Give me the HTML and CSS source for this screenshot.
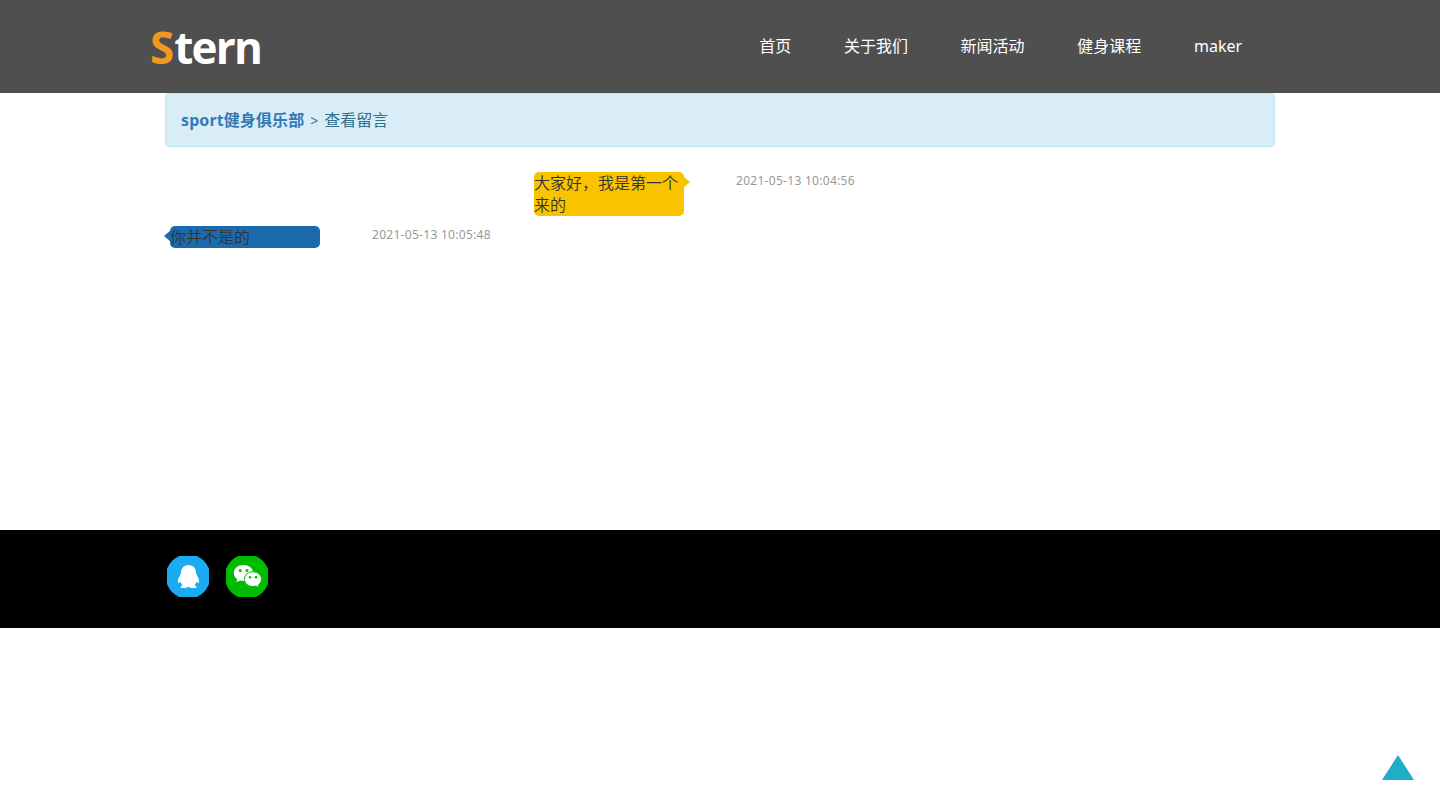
FILE: index.html
```html
<!DOCTYPE html>
<html lang="zh-CN">
<head>
<meta charset="utf-8">
<title>查看留言</title>
<link rel="stylesheet" href="styles.css">
</head>
<body>
<header class="header">
  <div class="logo"><span class="logo-initial">S</span>tern</div>
  <nav class="nav">
    <a>首页</a><a>关于我们</a><a>新闻活动</a><a>健身课程</a><a class="user">maker</a>
  </nav>
</header>
<main class="main">
  <div class="crumbs"><b>sport健身俱乐部</b><span class="sep">&gt;</span><span>查看留言</span></div>
  <div class="message right">
    <div class="bubble">大家好，我是第一个来的</div>
    <time>2021-05-13 10:04:56</time>
  </div>
  <div class="message left">
    <div class="bubble">你并不是的</div>
    <time>2021-05-13 10:05:48</time>
  </div>
</main>
<footer class="footer">
  <svg class="social" viewBox="0 0 42 41">
    <circle cx="21" cy="20.5" r="22.3" fill="#1caaf2"/>
    <path fill="#fff" d="M21.500 9C16.500 9 14 12.500 14 17.500C13 19.500 11 22 11 25.500C11 27.700 12 27.500 13.500 25.500C13.800 27 14.600 28.200 15.700 29.200C13.500 29.700 12.500 32 16 32C18.500 32 20.500 31.700 21.500 30.800C22.500 31.700 24.500 32 27 32C31 32 29.500 29.700 27.500 29.200C28.500 28.200 29.200 27 29.500 25.500C31 27.500 32 27.700 32 25.500C32 22 30 19.500 29 17.500C29 12.500 26.500 9 21.500 9Z"/>
  </svg>
  <svg class="social" viewBox="0 0 42 41">
    <circle cx="21" cy="20.500" r="22.300" fill="#00bb00"/>
    <path fill="#fff" d="M17.500 9C12 9 7.800 12.500 7.800 17C7.800 19.500 9.100 21.700 11.200 23.200L10.300 26.300L14 24.500C15.100 24.800 16.300 25 17.500 25C22.900 25 27.200 21.500 27.200 17S22.900 9 17.500 9Z"/>
    <path fill="#fff" stroke="#00bb00" stroke-width="1" d="M27 15.800C22.200 15.800 18.400 19 18.400 23.200S22.200 30.500 27 30.500C28 30.500 29 30.300 30 30L33.200 31.900L32.400 28.900C34.300 27.500 35.500 25.500 35.500 23.200C35.500 19 31.700 15.800 27 15.800Z"/>
    <g fill="#00bb00"><circle cx="14.200" cy="14.500" r="1.500"/><circle cx="21" cy="14.500" r="1.500"/><circle cx="24" cy="21.300" r="1.200"/><circle cx="30" cy="21.300" r="1.200"/></g>
  </svg>
</footer>
<svg class="to-top" viewBox="0 0 32 25"><path fill="#20adc7" d="M16 0L32 25H0Z"/></svg>
</body>
</html>
```
FILE: styles.css
```css
* { box-sizing: border-box; }
body {
  margin: 0;
  background: #fff;
  color: #333;
  font: 16px/22px "Noto Sans", "Noto Sans CJK SC", sans-serif;
}
.header {
  display: flex;
  justify-content: space-between;
  height: 93px;
  padding: 0 198px 0 150px;
  background: #4f4f4f;
  color: #fff;
}
.logo {
  font: bold 44px/94px "Open Sans", sans-serif;
  letter-spacing: -1.8px;
}
.logo-initial { color: #f0981f; letter-spacing: 0; }
.nav {
  display: flex;
  gap: 52.7px;
  line-height: 92px;
}
.user { width: 48px; white-space: nowrap; }
.main {
  width: 1110px;
  height: 437px;
  margin: 0 auto;
}
.crumbs {
  display: flex;
  align-items: center;
  height: 54px;
  margin-bottom: 25px;
  padding: 0 15px;
  border: 1px solid #bce8f1;
  border-radius: 4px;
  background: #d9edf7;
  color: #31708f;
}
.crumbs b { color: #337ab7; letter-spacing: 0.1px; }
.sep { margin: 2px 6px 0; font-size: 14px; }
.message {
  display: flex;
  align-items: flex-start;
  margin-bottom: 10px;
}
.right { padding-left: 369px; }
.left { padding-left: 5px; }
.bubble {
  position: relative;
  width: 150px;
  border-radius: 5px;
  font-weight: 350;
}
.right .bubble { background: #f9c300; }
.left .bubble { background: #1b6bac; }
.bubble::after {
  content: "";
  position: absolute;
  top: 4px;
  border: 6px solid transparent;
}
.right .bubble::after { right: -6px; border-right: 0; border-left: 7px solid #f9c300; }
.left .bubble::after { left: -6px; border-left: 0; border-right: 7px solid #1b6bac; }
.message time {
  margin-left: 52px;
  color: #999;
  font-size: 12px;
  line-height: 18px;
  letter-spacing: 0.29px;
}
.footer {
  display: flex;
  gap: 17px;
  height: 98px;
  padding: 26px 167px;
  background: #000;
}
.social { width: 42px; height: 41px; }
.to-top {
  position: fixed;
  right: 26px;
  bottom: 19px;
  width: 32px;
  height: 25px;
}
```
